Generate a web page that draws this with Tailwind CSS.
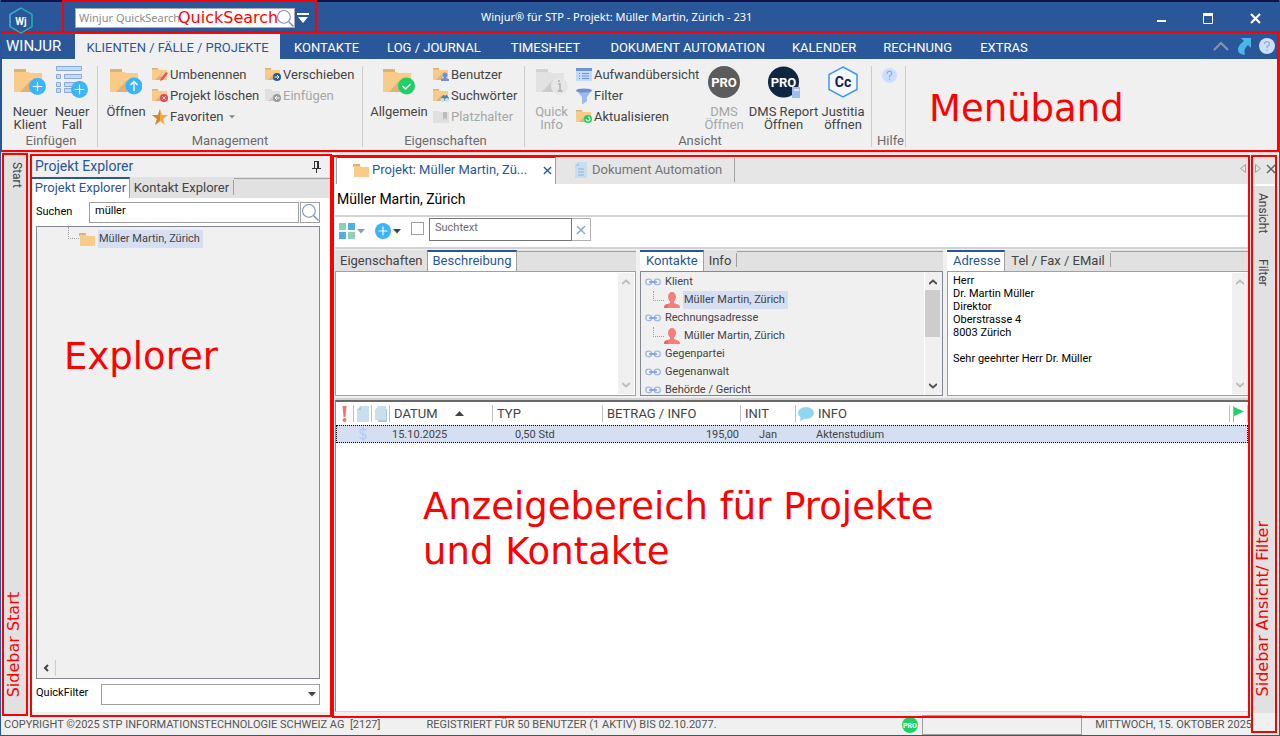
<!DOCTYPE html>
<html lang="de">

<head>
    <meta charset="UTF-8">
    <meta name="viewport" content="width=device-width, initial-scale=1.0">
    <title>Winjur® für STP - Projekt: Müller Martin, Zürich - 231</title>
    <script src="https://cdn.jsdelivr.net/npm/@tailwindcss/browser@4"></script>
</head>

<body class="bg-[#f0f0f0] font-['Roboto',sans-serif] text-[13px] leading-4 text-[#444444]">
    <!-- Icons -->
    <svg class="hidden">
        <symbol id="folder" viewBox="0 0 32 32">
            <path d="M0 3h12v4H0z" fill="#deb178" />
            <path d="M0 6h14l2 1h12v19H0z" fill="#f9cb89" />
            <path d="M6 26L17 14v12z" fill="#deb178" />
        </symbol>
        <symbol id="folder-grey" viewBox="0 0 32 32">
            <path d="M0 3h12v4H0z" fill="#d2d2d2" />
            <path d="M0 6h14l2 1h12v19H0z" fill="#e2e2e2" />
            <path d="M6 26L17 14v12z" fill="#cbcbcb" />
        </symbol>
        <symbol id="folder-klein" viewBox="0 0 16 16">
            <path d="M0 1h6v3H0z" fill="#deb178" />
            <path d="M0 2.500h7l1 .500h7v10H0z" fill="#f9cb89" />
            <path d="M3 13l6-6v6z" fill="#deb178" />
        </symbol>
        <symbol id="folder-flat" viewBox="0 0 16 16">
            <path d="M0 2h7v3H0z" fill="#deb178" />
            <path d="M1 4h6l1 1h8v10H1z" fill="#f9cb89" />
        </symbol>
        <symbol id="plus" viewBox="0 0 16 16">
            <circle cx="8" cy="8" r="8" fill="#3cb4fa" />
            <path d="M8 3.5v9M3.5 8h9" stroke="#fff" stroke-width="1.1" />
        </symbol>
        <symbol id="lupe" viewBox="0 0 16 16">
            <circle cx="6.5" cy="6.5" r="6" fill="none" stroke="#7b8fc0" />
            <path d="M11 11l4.5 4.5" stroke="#7b8fc0" stroke-width="1.4" />
        </symbol>
        <symbol id="caret" viewBox="0 0 8 5">
            <path d="M0 0h8L4 4.500z" fill="currentColor" />
        </symbol>
        <symbol id="up" viewBox="0 0 8 6">
            <path d="M0 5l4-3.500L8 5" fill="none" stroke="currentColor" stroke-width="2" />
        </symbol>
        <symbol id="down" viewBox="0 0 8 6">
            <path d="M0 1l4 3.500L8 1" fill="none" stroke="currentColor" stroke-width="2" />
        </symbol>
        <symbol id="cross" viewBox="0 0 10 10">
            <path d="M1 1l8 8M9 1l-8 8" fill="none" stroke="currentColor" stroke-width="1.5" />
        </symbol>
        <symbol id="kette" viewBox="0 0 16 8">
            <rect x=".7" y="1.200" width="6" height="5.500" rx="2.700" fill="none" stroke="#9db8e6" stroke-width="1.300" />
            <rect x="9.300" y="1.200" width="6" height="5.500" rx="2.700" fill="none" stroke="#9db8e6" stroke-width="1.300" />
            <path d="M4 4h8" stroke="#6f93d2" stroke-width="1.400" />
        </symbol>
        <symbol id="person" viewBox="0 0 16 16">
            <ellipse cx="8" cy="5" rx="4" ry="5" fill="#f37f7c" />
            <path d="M6 8h4v3l5 2q1 1 1 3H0q0-2 1-3l5-2z" fill="#f37f7c" />
            <path d="M0 16q0-2 1-3l3-1v4z" fill="#dd6b69" />
        </symbol>
        <symbol id="seite" viewBox="0 0 14 16">
            <path d="M5 0h8v16H1V4z" fill="#c9deef" />
            <path d="M1 4l4-4v4z" fill="#a9c9e2" />
        </symbol>
        <symbol id="frage" viewBox="0 0 16 16">
            <circle cx="8" cy="8" r="8" fill="#cbdffb" />
            <path d="M5.500 6q0-2.500 2.500-2.500T10.500 6Q10.500 7.500 8 8.500V10M8 11.500V13" fill="none" stroke="#8ba6d3" stroke-width="1.200" />
        </symbol>
    </svg>

    <div class="flex h-screen flex-col overflow-hidden border-x border-b border-[#2a579a]">
        <div class="h-[2px] shrink-0 bg-[#10124a]"></div>

        <!-- Titelleiste -->
        <header class="relative flex h-[29px] shrink-0 items-center bg-[#2a579a] text-white">
            <svg class="z-10 ml-[7px] mt-[7px] h-[27px] w-[26px]" viewBox="0 0 26 27">
                <path d="M13 1l11 6.500v12L13 26 2 19.500v-12z" fill="none" stroke="#20b8b0" stroke-width="1.400" />
                <path d="M13 1L2 7.500v12" fill="none" stroke="#4a9fe0" stroke-width="1.400" />
                <text x="13" y="17.500" font-size="10" font-weight="700" text-anchor="middle" fill="#fff">Wj</text>
            </svg>
            <label for="quicksearch" class="sr-only">QuickSearch</label>
            <div class="relative ml-[41px] mt-[3px] flex h-5 w-[220px] items-center border border-[#aaaaaa] bg-white">
                <input id="quicksearch" type="text" placeholder="Winjur QuickSearch" class="w-full pl-[3px] font-['Noto_Sans',sans-serif] text-[11px] text-[#444444] outline-none placeholder:text-[#8c8c8c]">
                <svg class="absolute right-0 h-[17px] w-[17px]"><use href="#lupe" /></svg>
                <span class="absolute left-[102px] font-['DejaVu_Sans',sans-serif] text-[16px] text-[#ff0000]">QuickSearch</span>
            </div>
            <svg class="ml-[2px] mt-[2px] h-[10px] w-3" viewBox="0 0 12 10">
                <path d="M0 0h12v2H0zM1 4h10L6 10z" fill="#fff" />
            </svg>
            <h1 class="ml-[172px] mt-px whitespace-nowrap font-['Noto_Sans',sans-serif] text-[11px]">Winjur® für STP - Projekt: Müller Martin, Zürich - 231</h1>
            <div class="ml-auto mr-[18px] mt-[4px] flex items-center gap-9">
                <button aria-label="Minimieren"><svg class="h-[11px] w-[11px]" viewBox="0 0 11 11"><path d="M1 7h9v2H1z" fill="#fff" /></svg></button>
                <button aria-label="Maximieren"><svg class="h-[11px] w-[11px]" viewBox="0 0 11 11"><path d="M.500 1.500h9v9h-9zM0 1.500h10" fill="none" stroke="#fff" /><path d="M0 0h10v3H0z" fill="#fff" /></svg></button>
                <button aria-label="Schliessen"><svg class="h-[11px] w-[11px]" viewBox="0 0 11 11"><path d="M1 1l9 9M10 1l-9 9" stroke="#fff" stroke-width="2.200" /></svg></button>
            </div>
            <div class="pointer-events-none absolute -top-[2px] -bottom-[2px] left-[61px] w-[255px] border-2 border-[#ff0000]"></div>
        </header>

        <!-- Menüband -->
        <section class="relative shrink-0">
            <nav class="flex h-7 items-end bg-[#2a579a] text-white">
                <button class="h-7 w-[74px] pl-[5px] pt-px text-left text-[15px]">WINJUR</button>
                <button class="h-[25px] w-[205px] whitespace-nowrap bg-[#f0f0f0] pt-[2px] text-[#2a579a]">KLIENTEN / FÄLLE / PROJEKTE</button>
                <button class="h-[25px] px-[14px] pt-[2px]">KONTAKTE</button>
                <button class="h-[25px] px-[14px] pt-[2px]">LOG / JOURNAL</button>
                <button class="h-[25px] px-4 pt-[2px]">TIMESHEET</button>
                <button class="h-[25px] px-[14px] pt-[2px]">DOKUMENT AUTOMATION</button>
                <button class="h-[25px] px-[13px] pt-[2px]">KALENDER</button>
                <button class="h-[25px] px-[14px] pt-[2px]">RECHNUNG</button>
                <button class="h-[25px] px-[14px] pt-[2px]">EXTRAS</button>
                <div class="mb-1 ml-auto mr-1 flex items-center gap-2">
                    <svg class="h-[10px] w-4" viewBox="0 0 16 10"><path d="M1 9l7-7 7 7" fill="none" stroke="#8a93ad" stroke-width="2" /></svg>
                    <svg class="h-[18px] w-[14px]" viewBox="0 0 14 18"><path d="M4 1h10v10l-3-3q-5 4-3 10Q0 17 1 12q1-5 6-8z" fill="#4db5e8" /></svg>
                    <svg class="h-4 w-4"><use href="#frage" /></svg>
                </div>
            </nav>

            <div class="flex h-[94px] border-b border-[#d0d0d0] pt-[7px] leading-[13px]">
                <!-- Einfügen -->
                <div class="flex h-[81px] w-[97px] flex-col border-r border-[#cccccc]">
                    <div class="flex flex-1 pl-2">
                        <button class="flex w-[42px] flex-col items-center">
                            <svg class="mb-[7px] h-8 w-8" viewBox="0 0 32 32"><use href="#folder" /><use href="#plus" x="15" y="12" width="17" height="17" /></svg>
                            Neuer<br>Klient
                        </button>
                        <button class="flex w-[42px] flex-col items-center">
                            <svg class="mb-[7px] h-8 w-8" viewBox="0 0 32 32"><path d="M.500 .500h25v4H.500zM.500 8.500h4v4h-4zM8.500 8.500h17v4h-17zM.500 16.500h4v4h-4zM8.500 16.500h17v4h-17zM.500 22.500h4v4h-4zM8.500 22.500h12v4h-12z" fill="#c2dafc" stroke="#8aaae0" /><use href="#plus" x="15" y="15" width="17" height="17" /></svg>
                            Neuer<br>Fall
                        </button>
                    </div>
                    <p class="pl-1 text-center text-[#6b6b6b]">Einfügen</p>
                </div>
                <!-- Management -->
                <div class="flex h-[81px] w-[265px] flex-col border-r border-[#cccccc]">
                    <div class="flex flex-1">
                        <button class="flex w-[54px] flex-col items-center pl-[2px]">
                            <svg class="mb-[7px] h-8 w-8" viewBox="0 0 32 32"><use href="#folder" /><circle cx="24" cy="20" r="8.500" fill="#3cb4fa" /><path d="M24 25v-9.500M20.500 19l3.500-3.500 3.500 3.500" fill="none" stroke="#fff" stroke-width="1.300" /></svg>
                            Öffnen
                        </button>
                        <div class="flex w-[113px] flex-col">
                            <button class="flex h-[21px] items-center gap-[2px] pb-1"><svg class="h-4 w-4" viewBox="0 0 16 16"><use href="#folder-klein" /><path d="M8 14l1-3 5-6 2 1-5 7z" fill="#e85a5a" /></svg>Umbenennen</button>
                            <button class="flex h-[21px] items-center gap-[2px] pb-1"><svg class="h-4 w-4" viewBox="0 0 16 16"><use href="#folder-klein" /><circle cx="12" cy="10" r="4" fill="#e8445a" /><path d="M10.500 8.500l3 3M13.500 8.500l-3 3" stroke="#fff" /></svg><span class="whitespace-nowrap">Projekt löschen</span></button>
                            <button class="flex h-[21px] items-center gap-[2px] pb-1"><svg class="h-4 w-4" viewBox="0 0 16 16"><path d="M8 0l2 6h6l-5 4 2 6-5-4-5 4 2-6-5-4h6z" fill="#f5a83c" /><path d="M8 0v12l-5 4 2-6-5-4h6z" fill="#c98a3c" /></svg>Favoriten<svg class="ml-1 h-1 w-[6px] text-[#888888]"><use href="#caret" /></svg></button>
                        </div>
                        <div class="flex flex-col">
                            <button class="flex h-[21px] items-center gap-[2px] pb-1"><svg class="h-4 w-4" viewBox="0 0 16 16"><use href="#folder-klein" /><circle cx="12" cy="10" r="4" fill="#2a579a" /><path d="M9.500 10h4.500M12 8l2 2-2 2" fill="none" stroke="#fff" /></svg>Verschieben</button>
                            <button class="flex h-[21px] items-center gap-[2px] pb-1 text-[#a6a6a6]" disabled><svg class="h-4 w-4" viewBox="0 0 16 16"><path d="M0 1h6l1 2h8v10H0z" fill="#e0e0e0" /><path d="M3 13l6-6v6z" fill="#cbcbcb" /><circle cx="12" cy="10" r="4" fill="#9a9a9a" /><path d="M14.500 10H10M12 8l-2 2 2 2" fill="none" stroke="#fff" /></svg>Einfügen</button>
                        </div>
                    </div>
                    <p class="text-center text-[#6b6b6b]">Management</p>
                </div>
                <!-- Eigenschaften -->
                <div class="flex h-[81px] w-[162px] flex-col border-r border-[#cccccc]">
                    <div class="flex flex-1">
                        <button class="flex w-[70px] flex-col items-center pl-[2px]">
                            <svg class="mb-[7px] h-8 w-8" viewBox="0 0 32 32"><use href="#folder" /><circle cx="23.500" cy="20" r="8.500" fill="#20cf66" /><path d="M19.500 20l3 3 5-5" fill="none" stroke="#fff" stroke-width="1.500" /></svg>
                            Allgemein
                        </button>
                        <div class="flex flex-col">
                            <button class="flex h-[21px] items-center gap-[2px] pb-1"><svg class="h-4 w-4" viewBox="0 0 16 16"><use href="#folder-klein" /><circle cx="12" cy="8" r="2.500" fill="#6f93d2" /><path d="M11 9h2v2l3 1v2H8v-2l3-1z" fill="#6f93d2" /></svg>Benutzer</button>
                            <button class="flex h-[21px] items-center gap-[2px] pb-1"><svg class="h-4 w-4" viewBox="0 0 16 16"><use href="#folder-klein" /><path d="M8 10l2-3h1l1 1 1-1h1l2 3-1 3H8z" fill="#5a7fa8" /><circle cx="9.500" cy="12" r="2" fill="#bfe8f5" /><circle cx="14" cy="12" r="2" fill="#bfe8f5" /></svg>Suchwörter</button>
                            <button class="flex h-[21px] items-center gap-[2px] pb-1 text-[#a6a6a6]" disabled><svg class="h-4 w-4" viewBox="0 0 16 16"><path d="M0 2h6l1 1h9v11H0z" fill="#e0e0e0" /><path d="M10 3h4v8l-2-2-2 2z" fill="#bcbcbc" /></svg>Platzhalter</button>
                        </div>
                    </div>
                    <p class="pl-1 text-center text-[#6b6b6b]">Eigenschaften</p>
                </div>
                <!-- Ansicht -->
                <div class="flex h-[81px] w-[347px] flex-col border-r border-[#cccccc]">
                    <div class="flex flex-1">
                        <button class="flex w-[51px] flex-col items-center pl-[2px] text-[#a6a6a6]" disabled>
                            <svg class="mb-[7px] h-8 w-8" viewBox="0 0 32 32"><use href="#folder-grey" /><circle cx="23.500" cy="20" r="8.500" fill="#e6e6e6" /><path d="M22 18h2v7M21.500 25h5M23 14v2" fill="none" stroke="#b0b0b0" stroke-width="1.500" /></svg>
                            Quick<br>Info
                        </button>
                        <div class="flex w-[122px] flex-col">
                            <button class="flex h-[21px] items-center gap-[2px] pb-1"><svg class="h-4 w-4 shrink-0" viewBox="0 0 16 16"><path d="M0 1h16v13H0z" fill="#c2dafc" /><path d="M0 1h16v3H0z" fill="#6f93d2" /><path d="M3 6.500h1M6 6.500h7M3 9h1M6 9h7M3 11.500h1M6 11.500h7" stroke="#6f93d2" /></svg>Aufwandübersicht</button>
                            <button class="flex h-[21px] items-center gap-[2px] pb-1"><svg class="h-4 w-4" viewBox="0 0 16 16"><path d="M0 2l6 7v7h1l4-3V9l5-7z" fill="#9bbcf0" /><ellipse cx="8" cy="2.500" rx="8" ry="2" fill="#6f8fd0" /></svg>Filter</button>
                            <button class="flex h-[21px] items-center gap-[2px] pb-1"><svg class="h-4 w-4" viewBox="0 0 16 16"><use href="#folder-klein" /><circle cx="12" cy="10" r="4" fill="#20cf66" /><path d="M10 10a2 2 0 1 0 2-2" fill="none" stroke="#fff" /></svg>Aktualisieren</button>
                        </div>
                        <button class="flex w-[52px] flex-col items-center text-[#a6a6a6]" disabled>
                            <svg class="mb-[7px] h-8 w-8" viewBox="0 0 32 32"><circle cx="16" cy="16" r="16" fill="#5c5c5c" /><text x="16" y="21" font-size="13" font-weight="700" text-anchor="middle" fill="#fff">PRO</text></svg>
                            DMS<br>Öffnen
                        </button>
                        <button class="flex w-[67px] flex-col items-center whitespace-nowrap">
                            <svg class="mb-[7px] h-8 w-8" viewBox="0 0 32 32"><circle cx="15.500" cy="16" r="15.500" fill="#0f2740" /><text x="15.500" y="21" font-size="13" font-weight="700" text-anchor="middle" fill="#fff">PRO</text><path d="M24 21h8v11h-8z" fill="#9fbdf0" /><path d="M26 23h5v2h-5z" fill="#dbe8fc" /></svg>
                            DMS Report<br>Öffnen
                        </button>
                        <button class="flex w-[52px] flex-col items-center">
                            <svg class="mb-[7px] h-8 w-8" viewBox="0 0 32 32"><path d="M16 1l14 7.500v15L16 31 2 23.500v-15z" fill="#f4f8fc" stroke="#3f97f5" stroke-width="1.500" /><text x="16" y="21" font-size="14" font-weight="700" text-anchor="middle" fill="#141a4a">Cc</text></svg>
                            Justitia<br>öffnen
                        </button>
                    </div>
                    <p class="pl-1 text-center text-[#6b6b6b]">Ansicht</p>
                </div>
                <!-- Hilfe -->
                <div class="flex h-[81px] w-[34px] flex-col items-center border-r border-[#cccccc]">
                    <button class="mt-[2px] pl-[2px]" aria-label="Hilfe"><svg class="h-[15px] w-[15px]" viewBox="0 0 16 16"><use href="#frage" /></svg></button>
                    <p class="mt-auto pl-1 text-[#6b6b6b]">Hilfe</p>
                </div>
                <p class="ml-5 mt-9 pl-[3px] font-['DejaVu_Sans',sans-serif] text-[37px] text-[#ff0000]">Menüband</p>
            </div>
            <div class="pointer-events-none absolute -left-px right-0 top-0 bottom-[1px] border-2 border-[#ff0000]"></div>
        </section>

        <!-- Arbeitsbereich -->
        <div class="flex min-h-0 flex-1">
            <!-- Sidebar Start -->
            <aside class="relative flex w-[26px] shrink-0 flex-col items-center justify-between bg-[#e1e1e1] pb-[18px] pt-[9px]">
                <button class="ml-[5px] text-[12px] [writing-mode:vertical-rl]">Start</button>
                <span class="rotate-180 font-['DejaVu_Sans',sans-serif] text-[16px] text-[#ff0000] [writing-mode:vertical-rl]">Sidebar Start</span>
                <div class="pointer-events-none absolute left-px -right-px top-0 -bottom-[1px] border-2 border-[#ff0000]"></div>
            </aside>

            <!-- Explorer -->
            <section class="relative ml-[3px] flex w-[302px] shrink-0 flex-col bg-white px-[2px]">
                <div class="flex h-6 items-center justify-between bg-[#f0f0f0] pl-[3px] pr-[9px]">
                    <h2 class="pt-px text-[14px] text-[#2a579a]">Projekt Explorer</h2>
                    <svg class="mt-1 h-3 w-[9px] text-[#333333]" viewBox="0 0 9 12"><path d="M2.500 1v6M6.500 1v6M2 .500h5M0 7.500h9M4.500 8v4M5.500 1v6" stroke="currentColor" fill="none" /></svg>
                </div>
                <div class="flex h-[21px] bg-[#e1e1e1]">
                    <button class="w-[98px] whitespace-nowrap border-r border-t-2 border-r-[#a0a0a0] border-t-[#2a579a] bg-white px-[2px] pb-[2px] text-[#2a579a]">Projekt Explorer</button>
                    <button class="w-[103px] whitespace-nowrap">Kontakt Explorer</button>
                    <span class="mt-[3px] h-[15px] border-l border-[#a0a0a0]"></span>
                    <span class="mt-px flex-1 border-t border-[#a0a0a0]"></span>
                </div>
                <div class="flex h-7 items-center pl-1 pr-[10px] pt-[1px] text-[11px] text-black">
                    <label for="suchen" class="w-[53px] pb-px">Suchen</label>
                    <input id="suchen" type="text" value="müller" class="h-[21px] min-w-0 flex-1 border border-[#a0a0a0] px-[5px] pb-1 outline-none">
                    <button aria-label="Suchen" class="ml-px flex h-[21px] w-5 items-center justify-center border border-[#a0a0a0]"><svg class="h-[17px] w-[17px]"><use href="#lupe" /></svg></button>
                </div>
                <div class="mx-1 mr-[10px] flex flex-1 flex-col border border-[#828790] bg-[#f0f0f0]">
                    <div class="flex h-6 items-center pl-[31px] text-[11px]">
                        <span class="mb-3 h-3 w-[11px] border-b border-l border-dotted border-[#a0a0a0]"></span>
                        <svg class="h-4 w-4"><use href="#folder-flat" /></svg>
                        <span class="ml-[3px] bg-[#d5dff1] py-px pl-px pr-[3px]">Müller Martin, Zürich</span>
                    </div>
                    <p class="mt-[83px] pl-[27px] font-['DejaVu_Sans',sans-serif] text-[37px] leading-[45px] text-[#ff0000]">Explorer</p>
                    <div class="mb-[2px] mt-auto flex h-4 w-[19px] items-center justify-center border-r border-[#cccccc] text-[#444444]">
                        <svg class="h-2 w-[6px]" viewBox="0 0 6 8"><path d="M5 1L2 4l3 3" fill="none" stroke="currentColor" stroke-width="2" /></svg>
                    </div>
                </div>
                <div class="flex h-[33px] shrink-0 pl-1 pr-[10px] pt-[5px] text-[11px] text-black">
                    <label for="quickfilter" class="w-[65px] pt-px">QuickFilter</label>
                    <div class="relative flex-1">
                        <select id="quickfilter" class="h-[21px] w-full appearance-none border border-[#a0a0a0] bg-white"><option></option></select>
                        <svg class="pointer-events-none absolute right-1 top-2 h-[5px] w-2 text-[#444444]"><use href="#caret" /></svg>
                    </div>
                </div>
                <div class="-mx-[2px] h-[3px] bg-[#f0f0f0]"></div>
                <div class="pointer-events-none absolute inset-x-0 top-px -bottom-[2px] border-2 border-[#ff0000]"></div>
            </section>

            <!-- Anzeigebereich -->
            <main class="relative flex min-w-0 flex-1 flex-col bg-white pl-[3px] pr-[2px]">
                <div class="flex h-[31px] shrink-0 items-end bg-[#e6e6e6]">
                    <div class="ml-px flex h-7 w-[220px] items-center border-x border-t-2 border-x-[#a0a0a0] border-t-[#2a579a] bg-white pb-[2px] pl-4 pr-[3px] text-[#2a579a]">
                        <svg class="mr-[3px] h-4 w-4"><use href="#folder-flat" /></svg>
                        <button class="min-w-0 flex-1 whitespace-nowrap text-left">Projekt: Müller Martin, Zü...</button>
                        <button aria-label="Tab schliessen"><svg class="h-[9px] w-[9px]" viewBox="0 0 10 10"><use href="#cross" /></svg></button>
                    </div>
                    <button class="mb-[2px] flex h-6 items-center border-r border-[#a0a0a0] pl-[18px] pr-3 text-[#757575]">
                        <svg class="mr-1 h-4 w-[14px]" viewBox="0 0 14 16"><use href="#seite" /><path d="M4 7h6M4 10h6M4 13h6" stroke="#8fb4d4" /></svg>
                        Dokument Automation
                    </button>
                    <svg class="mb-[11px] ml-auto mr-[2px] h-[9px] w-[6px]" viewBox="0 0 6 9"><path d="M5.500 .500v8l-5-4z" fill="none" stroke="#a0a0a0" /></svg>
                </div>
                <h2 class="flex h-[31px] shrink-0 items-center pb-px pl-[2px] text-[14px] text-black">Müller Martin, Zürich</h2>

                <div class="flex h-[34px] shrink-0 items-start border-y-2 border-[#d2d2d2] pl-1 pt-[2px]">
                    <button aria-label="Ansicht wählen" class="mt-1 flex items-center gap-[2px] text-[#999999]">
                        <svg class="h-4 w-4" viewBox="0 0 16 16"><path d="M0 0h7v7H0zM9 9h7v7H9z" fill="#8fd0b4" /><path d="M9 0h7v7H9zM0 9h7v7H0z" fill="#4db0e6" /></svg>
                        <svg class="h-[5px] w-2"><use href="#caret" /></svg>
                    </button>
                    <button aria-label="Neu" class="ml-[10px] mt-1 flex items-center gap-[2px] text-[#444444]">
                        <svg class="h-4 w-4"><use href="#plus" /></svg>
                        <svg class="h-[5px] w-2"><use href="#caret" /></svg>
                    </button>
                    <input type="checkbox" aria-label="Suche aktiv" class="ml-[10px] mt-[3px] h-[13px] w-[13px] appearance-none border border-[#a0a0a0] bg-white">
                    <input type="text" aria-label="Suchtext" placeholder="Suchtext" class="-mt-[1px] ml-[5px] h-[23px] w-[143px] border border-[#767676] pb-1 pl-[5px] text-[11px] outline-none placeholder:text-[#6a6a6a]">
                    <button aria-label="Suche leeren" class="-mt-[1px] flex h-[23px] w-[19px] items-center justify-center border border-l-0 border-[#b0b0b0] text-[#8ba6d3]"><svg class="h-[10px] w-[10px]" viewBox="0 0 10 10"><use href="#cross" /></svg></button>
                </div>

                <!-- Detailbereiche -->
                <div class="flex h-[151px] shrink-0 gap-1 border-b-2 border-[#d2d2d2] bg-[#f0f0f0] pb-[2px] pt-px">
                    <div class="flex flex-1 flex-col">
                        <div class="flex h-[21px] shrink-0 bg-[#e1e1e1]">
                            <button class="pl-[5px] pr-1">Eigenschaften</button>
                            <button class="border-x border-t-2 border-x-[#a0a0a0] border-t-[#2a579a] bg-white px-[5px] pb-[2px] text-[#2a579a]">Beschreibung</button>
                            <span class="mt-px flex-1 border-t border-[#a0a0a0]"></span>
                        </div>
                        <div class="flex flex-1 justify-end border border-[#a0a0a0] bg-white">
                            <div class="m-px flex w-4 flex-col items-center justify-between bg-[#f0f0f0] py-[6px] text-[#bcbcbc]">
                                <svg class="h-[6px] w-2"><use href="#up" /></svg>
                                <svg class="h-[6px] w-2"><use href="#down" /></svg>
                            </div>
                        </div>
                    </div>
                    <div class="flex w-[303px] shrink-0 flex-col">
                        <div class="flex h-[21px] shrink-0 bg-[#e1e1e1]">
                            <button class="border-r border-t-2 border-r-[#a0a0a0] border-t-[#2a579a] bg-white pl-[6px] pr-[5px] pb-[2px] text-[#2a579a]">Kontakte</button>
                            <button class="px-[5px]">Info</button>
                            <span class="mt-[3px] h-[14px] border-l border-[#a0a0a0]"></span>
                            <span class="mt-px flex-1 border-t border-[#a0a0a0]"></span>
                        </div>
                        <div class="flex min-h-0 flex-1 border border-[#828790] bg-[#f0f0f0]">
                            <ul class="flex-1 overflow-hidden pl-1 pt-px text-[11px] leading-[18px]">
                                <li><span class="flex items-center gap-1"><svg class="h-2 w-4"><use href="#kette" /></svg>Klient</span>
                                    <div class="flex items-center pl-2"><span class="mb-2 h-[10px] w-[11px] border-b border-l border-dotted border-[#a0a0a0]"></span><svg class="h-4 w-4"><use href="#person" /></svg><span class="ml-[3px] bg-[#d5dff1] pl-[1px] pr-[3px]">Müller Martin, Zürich</span></div>
                                </li>
                                <li><span class="flex items-center gap-1"><svg class="h-2 w-4"><use href="#kette" /></svg>Rechnungsadresse</span>
                                    <div class="flex items-center pl-2"><span class="mb-2 h-[10px] w-[11px] border-b border-l border-dotted border-[#a0a0a0]"></span><svg class="h-4 w-4"><use href="#person" /></svg><span class="ml-[3px] pl-[1px]">Müller Martin, Zürich</span></div>
                                </li>
                                <li class="flex items-center gap-1"><svg class="h-2 w-4"><use href="#kette" /></svg>Gegenpartei</li>
                                <li class="flex items-center gap-1"><svg class="h-2 w-4"><use href="#kette" /></svg>Gegenanwalt</li>
                                <li class="flex items-center gap-1"><svg class="h-2 w-4"><use href="#kette" /></svg>Behörde / Gericht</li>
                            </ul>
                            <div class="flex w-[18px] flex-col items-center border-l border-white pb-[6px] pr-[2px] pt-[7px] text-[#505050]">
                                <svg class="h-[6px] w-2"><use href="#up" /></svg>
                                <div class="mt-[5px] h-[47px] w-[15px] bg-[#cdcdcd]"></div>
                                <svg class="mt-auto h-[6px] w-2"><use href="#down" /></svg>
                            </div>
                        </div>
                    </div>
                    <div class="flex flex-1 flex-col">
                        <div class="flex h-[21px] shrink-0 bg-[#e1e1e1]">
                            <button class="border-r border-t-2 border-r-[#a0a0a0] border-t-[#2a579a] bg-white pl-[6px] pr-1 pb-[2px] text-[#2a579a]">Adresse</button>
                            <button class="pl-[6px] pr-[5px]">Tel / Fax / EMail</button>
                            <span class="mt-[3px] h-[14px] border-l border-[#a0a0a0]"></span>
                            <span class="mt-px flex-1 border-t border-[#a0a0a0]"></span>
                        </div>
                        <div class="flex flex-1 justify-between border border-r-0 border-[#a0a0a0] bg-white">
                            <p class="pl-[5px] pt-[2px] text-[11px] leading-[13px] text-black">Herr<br>Dr. Martin Müller<br>Direktor<br>Oberstrasse 4<br>8003 Zürich<br><br>Sehr geehrter Herr Dr. Müller</p>
                            <div class="my-px flex w-4 flex-col items-center justify-between bg-[#f0f0f0] py-[6px] text-[#bcbcbc]">
                                <svg class="h-[6px] w-2"><use href="#up" /></svg>
                                <svg class="h-[6px] w-2"><use href="#down" /></svg>
                            </div>
                        </div>
                    </div>
                </div>

                <!-- Journal -->
                <div class="flex flex-1 flex-col border-b border-l border-t-2 border-b-[#d9d9d9] border-l-[#828790] border-t-[#696969]">
                    <table class="w-full table-fixed border-collapse text-left">
                        <colgroup>
                            <col class="w-[18px]"><col class="w-[18px]"><col class="w-[18px]"><col class="w-[103px]"><col class="w-[110px]"><col class="w-[138px]"><col class="w-[55px]"><col><col class="w-[18px]">
                        </colgroup>
                        <thead>
                            <tr class="h-[23px]">
                                <th aria-label="Priorität"><span class="flex h-[17px] items-center border-r border-[#c0c0c0] pl-[6px]"><svg class="h-4 w-[5px]" viewBox="0 0 5 16"><path d="M.500 0h4l-1 11h-2z" fill="#ee7674" /><circle cx="2.500" cy="14" r="2" fill="#ee7674" /></svg></span></th>
                                <th aria-label="Dokument"><span class="flex h-[17px] items-center border-r border-[#c0c0c0] pl-[2px]"><svg class="h-4 w-[14px]"><use href="#seite" /></svg></span></th>
                                <th aria-label="Kopien"><span class="flex h-[17px] items-center border-r border-[#c0c0c0] pl-[2px]"><svg class="h-4 w-[14px]" viewBox="0 0 14 16"><path d="M6 3h7v13H4z" fill="#a9c9e2" /><path d="M4 0h8v14H1V4z" fill="#c9deef" /></svg></span></th>
                                <th class="font-normal"><span class="flex h-[17px] items-center border-r border-[#c0c0c0] pl-1">DATUM<svg class="ml-[17px] h-[5px] w-[9px]" viewBox="0 0 9 5"><path d="M0 5L4.500 0 9 5z" fill="#444" /></svg></span></th>
                                <th class="font-normal"><span class="flex h-[17px] items-center border-r border-[#c0c0c0] pl-1">TYP</span></th>
                                <th class="font-normal"><span class="flex h-[17px] items-center border-r border-[#c0c0c0] pl-1">BETRAG / INFO</span></th>
                                <th class="font-normal"><span class="flex h-[17px] items-center border-r border-[#c0c0c0] pl-1">INIT</span></th>
                                <th class="font-normal"><span class="flex h-[17px] items-center gap-1 border-r border-[#c0c0c0] pl-[2px]"><svg class="h-4 w-4" viewBox="0 0 16 16"><ellipse cx="8" cy="7" rx="8" ry="6" fill="#8fd6f2" /><path d="M3 10l-1 5 6-3z" fill="#8fd6f2" /></svg>INFO</span></th>
                                <th aria-label="Markierung"><span class="flex h-[17px] items-center border-r border-[#c0c0c0] pl-[3px]"><svg class="h-4 w-3" viewBox="0 0 12 16"><path d="M.500 0v16" stroke="#aaaacc" /><path d="M1 1l10 4.500L1 10z" fill="#20cf66" /></svg></span></th>
                            </tr>
                        </thead>
                        <tbody>
                            <tr class="h-[18px] bg-[#d5dff1] text-[11px] outline-1 -outline-offset-1 outline-dotted outline-black">
                                <td></td>
                                <td><svg class="mx-auto h-[14px] w-2" viewBox="0 0 8 14"><path d="M7 4Q7 2 4 2T1 4.500Q1 6.500 4 7T7 9.500Q7 12 4 12T1 10M4 0v14" fill="none" stroke="#b5cdf6" stroke-width="1.300" /></svg></td>
                                <td></td>
                                <td class="pl-[2px] pt-px">15.10.2025</td>
                                <td class="pl-[22px] pt-px">0,50 Std</td>
                                <td class="pr-[2px] pt-px text-right">195,00</td>
                                <td class="pl-[18px] pt-px">Jan</td>
                                <td class="pl-5 pt-px">Aktenstudium</td>
                                <td></td>
                            </tr>
                        </tbody>
                    </table>
                    <p class="mt-[41px] pl-[87px] font-['DejaVu_Sans',sans-serif] text-[37px] leading-[45px] text-[#ff0000]">Anzeigebereich für Projekte<br>und Kontakte</p>
                </div>
                <div class="h-[3px] shrink-0 bg-[#f0f0f0]"></div>
                <div class="pointer-events-none absolute inset-x-0 top-[2px] -bottom-[3px] z-10 border-2 border-[#ff0000]"></div>
            </main>

            <!-- Sidebar Ansicht / Filter -->
            <aside class="relative ml-px mr-[1px] flex w-[27px] shrink-0 flex-col">
                <div class="flex h-[33px] items-center gap-[5px] border-b-2 border-white bg-[#e6e6e6] pl-1">
                    <svg class="h-[9px] w-[6px] shrink-0" viewBox="0 0 6 9"><path d="M.500 .500v8l5-4z" fill="none" stroke="#a0a0a0" /></svg>
                    <button aria-label="Schliessen" class="text-[#666666]"><svg class="h-[10px] w-[10px]" viewBox="0 0 10 10"><use href="#cross" /></svg></button>
                </div>
                <div class="flex flex-1 flex-col items-center gap-[26px] bg-[#e1e1e1] pb-[17px] pr-1 pt-[7px] text-[12px]">
                    <button class="[writing-mode:vertical-rl]">Ansicht</button>
                    <button class="[writing-mode:vertical-rl]">Filter</button>
                    <span class="mt-auto rotate-180 whitespace-nowrap font-['DejaVu_Sans',sans-serif] text-[16px] text-[#ff0000] [writing-mode:vertical-rl]">Sidebar Ansicht/ Filter</span>
                </div>
                <div class="h-[2px] bg-[#f0f0f0]"></div>
                <div class="pointer-events-none absolute left-0 right-px top-[2px] -bottom-[18px] border-2 border-[#ff0000]"></div>
            </aside>
        </div>

        <!-- Statusleiste -->
        <footer class="flex h-5 shrink-0 items-center pl-[3px] pr-[27px] text-[11px] text-[#555555]">
            <span class="whitespace-pre">COPYRIGHT ©2025 STP INFORMATIONSTECHNOLOGIE SCHWEIZ AG  [2127]</span>
            <span class="ml-[46px]">REGISTRIERT FÜR 50 BENUTZER (1 AKTIV) BIS 02.10.2077.</span>
            <svg class="ml-auto h-4 w-4" viewBox="0 0 16 16"><circle cx="8" cy="8" r="8" fill="#20cf66" /><text x="8" y="10.500" font-size="7" font-weight="700" text-anchor="middle" fill="#fff">PRO</text></svg>
            <span class="ml-1 mr-[13px] h-5 w-40 border border-[#a0a0a0]"></span>
            <span>MITTWOCH, 15. OKTOBER 2025</span>
        </footer>
    </div>
</body>

</html>
